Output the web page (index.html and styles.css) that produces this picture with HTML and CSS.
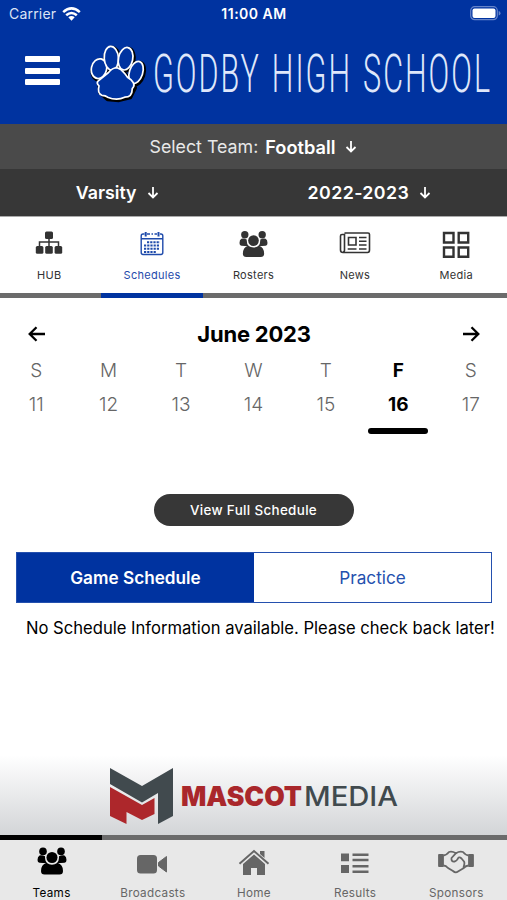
FILE: index.html
```
<!DOCTYPE html>
<html lang="en">
<head>
<meta charset="UTF-8">
<meta name="viewport" content="width=device-width, initial-scale=1.0">
<title>Godby High School</title>
<link rel="stylesheet" href="styles.css">
</head>
<body>

<!-- Shared icons -->
<svg class="sprite">
  <symbol id="people" viewBox="0 0 30 28">
    <circle cx="6" cy="4.4" r="3.8"/>
    <circle cx="24" cy="4.4" r="3.8"/>
    <path d="M2.5 8.5Q5 8 8 9.300Q7.800 14 10 16Q6 16 2.500 15.800Q.5 15.500.5 13Q.5 9.500 2.500 8.500zM27.500 8.500Q25 8 22 9.300Q22.200 14 20 16Q24 16 27.500 15.800Q29.500 15.500 29.500 13Q29.500 9.500 27.500 8.500z"/>
    <circle cx="15" cy="10.500" r="5.500"/>
    <path d="M9.500 15.800Q15 19.500 20.500 15.800Q26 17.500 26 24Q26 27.500 22.500 27.500H7.500Q4 27.500 4 24Q4 17.500 9.500 15.800z"/>
  </symbol>
  <symbol id="down" viewBox="0 0 12 13">
    <path d="M6 1V11.500M1.500 7L6 11.500L10.500 7" fill="none" stroke="currentColor" stroke-width="1.800"/>
  </symbol>
</svg>

<header class="header">
  <div class="status">
    <div class="carrier">
      <span>Carrier</span>
      <svg width="19" height="14" viewBox="0 0 19 14" fill="none" stroke="#fff" stroke-width="2.500">
        <path d="M1.200 5.200Q9.500-2.400 17.800 5.200M4.200 8.300Q9.500 3.600 14.800 8.300"/>
        <path d="M6.300 10.300Q9.500 7.600 12.700 10.300L9.500 13.700z" fill="#fff" stroke="none"/>
      </svg>
    </div>
    <span class="time">11:00 AM</span>
    <svg class="battery" width="31" height="15" viewBox="0 0 31 15">
      <rect x=".7" y=".7" width="26.600" height="13" rx="4" fill="none" stroke="#6684c9" stroke-width="1.200"/>
      <rect x="2.500" y="2.500" width="23" height="9.400" rx="2" fill="#fff"/>
      <path d="M28.700 5Q30.500 5.500 30.500 7.200T28.700 9.500z" fill="#6684c9"/>
    </svg>
  </div>
  <div class="brand">
    <div class="menu"><i></i><i></i><i></i></div>
    <svg class="logo" width="415" height="62" viewBox="0 0 415 62">
      <g stroke-linejoin="round" transform="translate(-.5 1) scale(.95)">
        <g fill="#000" stroke="#000" stroke-width="4" transform="translate(1 1.200)">
          <path d="M29 26L20 31L9 38L10 50L18 57L30 58L42 55L47 45L43 36L37 31z"/>
          <ellipse cx="10" cy="26" rx="8" ry="10.500" transform="rotate(12 10 26)"/>
          <ellipse cx="23" cy="15" rx="7.500" ry="12.500" transform="rotate(-4 23 15)"/>
          <ellipse cx="38" cy="15.500" rx="7.500" ry="12" transform="rotate(12 38 15.500)"/>
          <ellipse cx="49" cy="30" rx="7" ry="12" transform="rotate(18 49 30)"/>
        </g>
        <g fill="#0033a0" stroke="#fff" stroke-width="1.800">
          <ellipse cx="10" cy="26" rx="8" ry="10.500" transform="rotate(12 10 26)"/>
          <ellipse cx="23" cy="15" rx="7.500" ry="12.500" transform="rotate(-4 23 15)"/>
          <ellipse cx="38" cy="15.500" rx="7.500" ry="12" transform="rotate(12 38 15.500)"/>
          <ellipse cx="49" cy="30" rx="7" ry="12" transform="rotate(18 49 30)"/>
          <path d="M29 25Q24 25 20 30L9 39Q7 41 10 44Q8 52 13 54Q17 54 19 56Q29 60 37 56Q45 56 45 47Q49 43 44 38Q39 35 37 31Q33 26 29 25z"/>
        </g>
      </g>
      <text class="school" x="63" y="49" textLength="339" lengthAdjust="spacingAndGlyphs">GODBY HIGH SCHOOL</text>
    </svg>
  </div>
</header>

<div class="team">
  <span>Select Team:</span>
  <b>Football</b>
  <svg width="12" height="13"><use href="#down"/></svg>
</div>
<div class="filters">
  <div class="level"><b>Varsity</b><svg width="12" height="13"><use href="#down"/></svg></div>
  <div class="year"><b>2022-2023</b><svg width="12" height="13"><use href="#down"/></svg></div>
</div>

<nav class="tabs top">
  <a class="tab">
    <svg width="28" height="28" viewBox="0 1 28 28">
      <path d="M14 9V18M4.500 18V13H23.500V18" fill="none" stroke="currentColor" stroke-width="1.500"/>
      <rect x="10" y="2.500" width="8" height="7.500" rx="1.500"/>
      <rect x=".8" y="17" width="7.600" height="7.800" rx="1.500"/>
      <rect x="10.200" y="17" width="7.600" height="7.800" rx="1.500"/>
      <rect x="19.600" y="17" width="7.600" height="7.800" rx="1.500"/>
    </svg>
    <span>HUB</span>
  </a>
  <a class="tab active">
    <svg width="28" height="28" viewBox="0 0 28 28" fill="none" stroke="currentColor">
      <path d="M6.500 4H5Q3.200 4 3.200 6V22.500Q3.200 24.500 5.200 24.500H22.800Q24.800 24.500 24.800 22.500V6Q24.800 4 23 4H22M9 4H12M13.500 4H15M16.500 4H19M3.500 8.700H24.500" stroke-width="1.400"/>
      <path d="M7.700 2V6.500M20.500 2V6.500" stroke-width="2"/>
      <path d="M9 12.200H22M6 15.500H22M6 18.800H22M6 22H18.500" stroke-width="2" stroke-dasharray="2.200 1"/>
    </svg>
    <span>Schedules</span>
  </a>
  <a class="tab">
    <svg width="29" height="28"><use href="#people"/></svg>
    <span>Rosters</span>
  </a>
  <a class="tab">
    <svg width="32" height="28" viewBox="0 0 32 28" fill="none" stroke="currentColor" stroke-width="1.600">
      <path d="M5.500 3H29Q30.500 3 30.500 4.500V20Q30.500 22.500 28.500 22.500H4Q1.500 22.500 1.500 20V6Q1.500 4.500 3 4.500H5.500V20Q5.500 22 4 22"/>
      <path d="M9.500 7.500H17V15H9.500zM20 7.500H27.500M20 11.200H27.500M20 15H27.500M8.700 19H17.500M20 19H27.500"/>
    </svg>
    <span>News</span>
  </a>
  <a class="tab">
    <svg width="28" height="28" viewBox="0 0 28 28" fill="none" stroke="currentColor" stroke-width="2.400">
      <path d="M2 3H11.500V12.500H2zM16.700 3H26.200V12.500H16.700zM2 17.500H11.500V26.800H2zM16.700 17.500H26.200V26.800H16.700z"/>
    </svg>
    <span>Media</span>
  </a>
</nav>

<main>
  <div class="month">
    <svg width="18" height="16" viewBox="0 0 18 16"><path d="M17 8H2M8.500 1.200L1.700 8L8.500 14.800"/></svg>
    <h2>June 2023</h2>
    <svg width="18" height="16" viewBox="0 0 18 16"><path d="M1 8H16M9.500 1.200L16.300 8L9.500 14.800"/></svg>
  </div>
  <div class="week">
    <div class="day"><span>S</span><span>11</span></div>
    <div class="day"><span>M</span><span>12</span></div>
    <div class="day"><span>T</span><span>13</span></div>
    <div class="day"><span>W</span><span>14</span></div>
    <div class="day"><span>T</span><span>15</span></div>
    <div class="day today"><span>F</span><span>16</span></div>
    <div class="day"><span>S</span><span>17</span></div>
  </div>
  <button class="full">View Full Schedule</button>
  <div class="switch">
    <div class="on">Game Schedule</div>
    <div>Practice</div>
  </div>
  <p class="empty">No Schedule Information available. Please check back later!</p>
</main>

<div class="sponsor">
  <svg width="64" height="58" viewBox="0 0 64 58">
    <path d="M0 0L32 18L63 0V48L48 56V25L32 34.500L0 16z" fill="#414a4e"/>
    <path d="M0 19L32 37L44.500 30V46L32 52L16.500 44V56L0 48z" fill="#ad272b"/>
  </svg>
  <svg width="250" height="40" viewBox="0 0 250 40">
    <text class="mascot" x="0" y="30" textLength="121" lengthAdjust="spacingAndGlyphs">MASCOT</text>
    <text class="media" x="123" y="30" textLength="94" lengthAdjust="spacingAndGlyphs">MEDIA</text>
  </svg>
</div>

<nav class="tabs bottom">
  <a class="tab active">
    <svg width="30" height="28"><use href="#people"/></svg>
    <span>Teams</span>
  </a>
  <a class="tab">
    <svg width="32" height="28" viewBox="0 -2 32 28">
      <rect x="0" y="6" width="20" height="18.500" rx="3.500"/>
      <path d="M21.500 13.500L29.500 7.500V23L21.500 17z" stroke="currentColor" stroke-linejoin="round"/>
    </svg>
    <span>Broadcasts</span>
  </a>
  <a class="tab">
    <svg width="32" height="28" viewBox="0 -3 32 28">
      <path d="M5 14L16 4.500L27 14V25.500H19V18H13V25.500H5zM22 1H26.500V8L22 4z"/>
      <path d="M1.500 13.800L16 1L30.500 13.800" fill="none" stroke="currentColor" stroke-width="2"/>
    </svg>
    <span>Home</span>
  </a>
  <a class="tab">
    <svg width="28" height="28" viewBox="0 -2 28 28">
      <path d="M0 4.500H8V12.300H0zM0 16H8V24H0zM11.500 4.500H27.500V7H11.500zM11.500 9.800H27.500V12.300H11.500zM11.500 16H27.500V18.500H11.500zM11.500 21.500H27.500V24H11.500z"/>
    </svg>
    <span>Results</span>
  </a>
  <a class="tab">
    <svg width="36" height="28" viewBox="0 -2 36 28" fill="none" stroke="currentColor" stroke-width="1.800" stroke-linejoin="round">
      <path d="M1 6H5V17H1zM31 6H35V17H31z" fill="currentColor"/>
      <path d="M5.500 6.500Q8 6.500 11 3Q14 2 18 4.200Q21.500 2 25 3Q28 6.500 30.500 6.500M5.500 16.500Q8 16.500 10 19L15 22Q17.500 24.500 20 22.500L25 19.500Q28 16.500 30.500 16.500"/>
      <path d="M18 4.200L13.500 9Q13 13 16.500 12.500Q19 12 20.500 8.500Q22 8 23.500 9.500L26 12.500Q27 14 25.500 18.500"/>
    </svg>
    <span>Sponsors</span>
  </a>
</nav>

</body>
</html>
```
FILE: styles.css
```
body {
  margin: 0;
  width: 507px;
  height: 900px;
  overflow: hidden;
  display: flex;
  flex-direction: column;
  background: #fff;
  color: #000;
  font-family: Inter, sans-serif;
}

svg {
  display: block;
  fill: currentColor;
  flex: none;
}

svg[fill="none"] {
  fill: none;
}

b {
  font-weight: 600;
}

.sprite {
  display: none;
}

/* Header */
.header {
  height: 124px;
  background: #0033a0;
  color: #fff;
}

.status {
  display: grid;
  grid-template-columns: 1fr auto 1fr;
  align-items: center;
  height: 27px;
  padding: 0 6px 0 9px;
  font-size: 14px;
}

.carrier {
  display: flex;
  align-items: center;
  gap: 6px;
  color: #dce4f5;
  letter-spacing: 0.2px;
}

.time {
  margin-right: 2px;
  font-weight: 600;
  font-size: 14px;
  letter-spacing: 0.5px;
}

.battery {
  justify-self: end;
}

.brand {
  display: flex;
  align-items: flex-start;
  padding: 16px 0 0 25px;
}

.menu {
  display: flex;
  flex-direction: column;
  gap: 5.5px;
  width: 35px;
  margin: 13px 30px 0 0;
}

.menu i {
  height: 6px;
  border-radius: 1px;
  background: #fff;
}

.school {
  font-family: Roboto, sans-serif;
  font-size: 54px;
  font-weight: 300;
  letter-spacing: 3.5px;
  word-spacing: 3px;
  fill: #dfe7fa;
}

/* Team filters */
.team,
.filters {
  display: flex;
  align-items: center;
  justify-content: center;
  color: #fff;
  font-size: 17.8px;
}

.team {
  height: 45px;
  background: #4a4a4a;
}

.team span {
  color: #e8e8e8;
  margin-right: 7px;
}

.team b {
  font-size: 18.2px;
}

.team svg {
  margin-left: 10px;
}

.filters {
  height: 47px;
  background: #373737;
}

.filters div {
  display: flex;
  align-items: center;
  gap: 10px;
}

.level {
  margin-right: 149px;
}

.year {
  letter-spacing: 0.4px;
}

/* Tab bars */
.tabs {
  display: flex;
  height: 82px;
  color: #333;
  box-sizing: border-box;
  border-top: 1px solid #aaa;
}

.tab {
  flex: 1;
  display: flex;
  flex-direction: column;
  align-items: center;
  box-sizing: border-box;
  padding-top: 13px;
  border-bottom: 5px solid #6b6b6b;
  font-size: 11px;
  letter-spacing: 0.3px;
}

.tab svg {
  height: 28px;
}

.tab span {
  margin-top: 10px;
  line-height: 14px;
}

.tab.active {
  color: #1f4bab;
  border-color: #0033a0;
}

.top .tab:first-child svg,
.top .tab:first-child span {
  margin-right: 3px;
}

/* Calendar */
main {
  display: flex;
  flex-direction: column;
  height: 457px;
}

.month {
  display: flex;
  align-items: center;
  justify-content: space-between;
  padding: 22px 27px 0 28px;
  height: 28px;
}

.month svg {
  fill: none;
  stroke: #000;
  stroke-width: 2.3px;
}

.month h2 {
  margin: 0;
  font-size: 22px;
  font-weight: 700;
  letter-spacing: -0.2px;
}

.week {
  display: flex;
  margin-top: 6px;
  height: 80px;
}

.day {
  flex: 1;
  display: flex;
  flex-direction: column;
  align-items: center;
  font-size: 19px;
  font-weight: 300;
  line-height: 34px;
  color: #666;
}

.today {
  color: #000;
  font-weight: 700;
}

.today::after {
  content: "";
  width: 60px;
  height: 6px;
  margin-top: 6px;
  border-radius: 3px;
  background: #000;
}

.full {
  align-self: center;
  width: 200px;
  height: 32px;
  margin-top: 60px;
  padding: 0;
  border: none;
  border-radius: 16px;
  background: #373737;
  color: #fff;
  font: 500 13.4px Inter, sans-serif;
  letter-spacing: 0.35px;
}

.switch {
  display: flex;
  box-sizing: border-box;
  height: 51px;
  margin: 26px 15px 0 16px;
  border: 1px solid #2450ae;
  font-size: 17.2px;
  line-height: 50px;
  text-align: center;
  color: #2450ae;
}

.switch div {
  flex: 1;
}

.switch .on {
  background: #0033a0;
  color: #fff;
  font-weight: 600;
}

.empty {
  margin: 15px 0 0 26px;
  font-size: 16.6px;
  line-height: 20px;
  white-space: nowrap;
}

/* Sponsor banner */
.sponsor {
  display: flex;
  align-items: flex-start;
  height: 80px;
  box-sizing: border-box;
  padding: 13px 0 0 110px;
  gap: 7px;
  background: linear-gradient(#fff, #d3d5d7);
}

.sponsor svg + svg {
  margin-top: 8px;
}

.mascot,
.media {
  font-family: Inter, sans-serif;
  font-size: 27px;
}

.mascot {
  font-weight: 900;
  fill: #a9272b;
}

.media {
  font-weight: 500;
  fill: #414a4e;
}

/* Bottom navigation */
.bottom {
  height: 65px;
  border: none;
  background: #e8e8e8;
  color: #666;
}

.bottom .tab {
  padding-top: 7px;
  border-top: 5px solid #6b6b6b;
  border-bottom: none;
  font-size: 11.7px;
}

.bottom .tab.active {
  padding-left: 1px;
  color: #000;
  border-color: #000;
}

.bottom .tab span {
  margin-top: 11px;
}
```
